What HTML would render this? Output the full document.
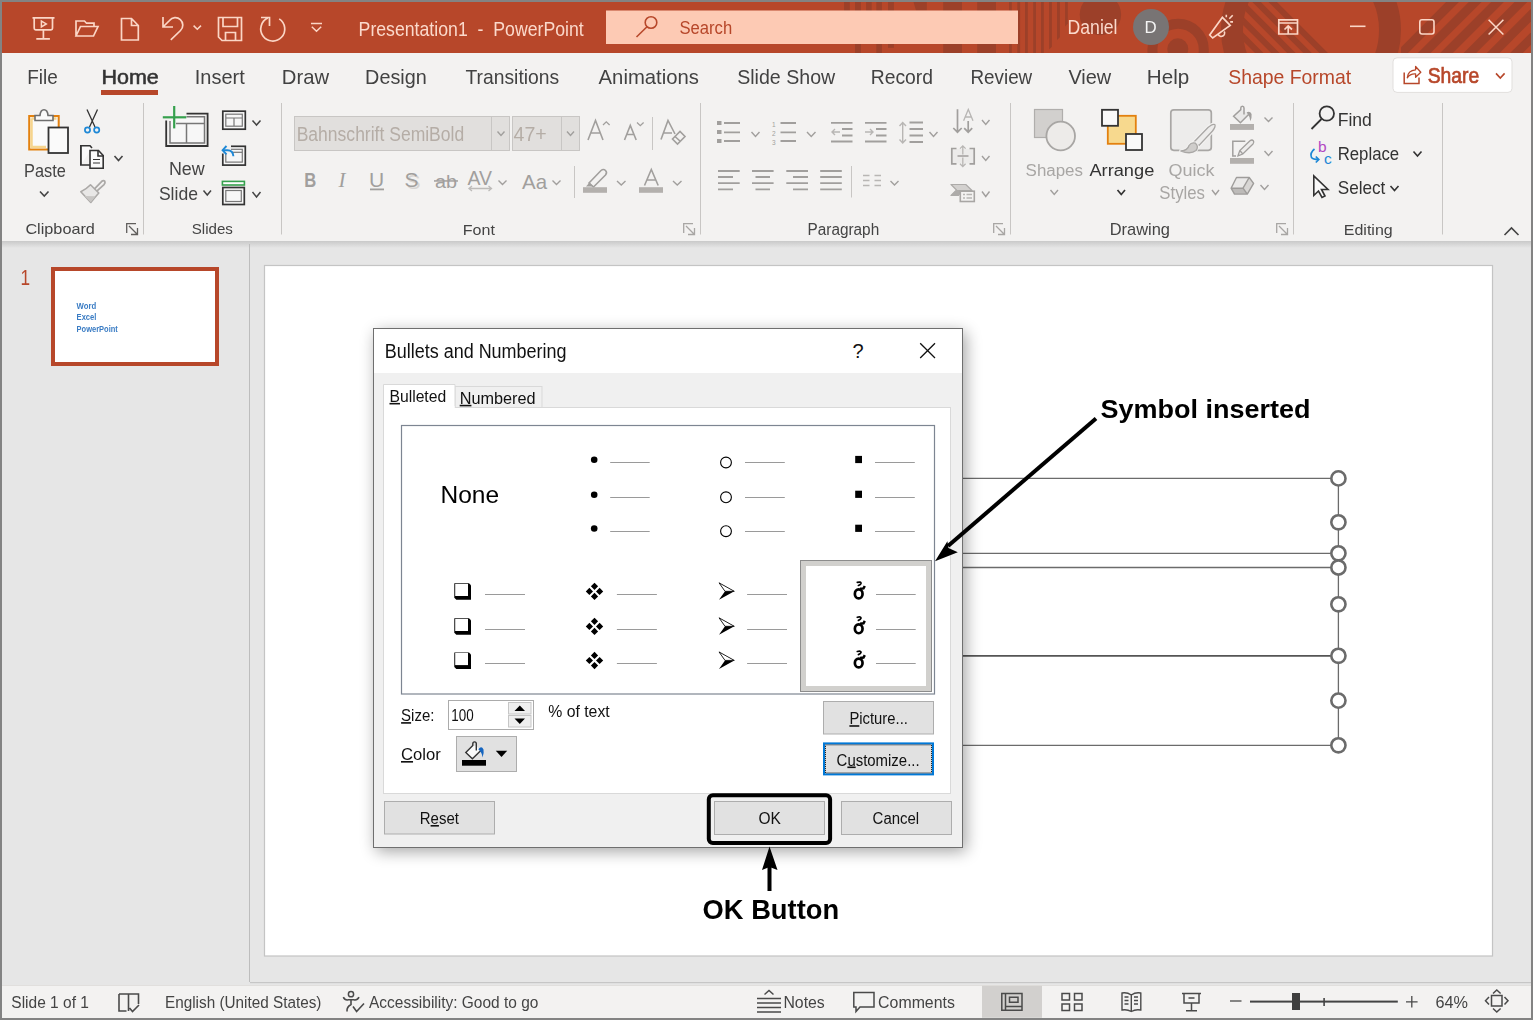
<!DOCTYPE html><html><head><meta charset="utf-8"><title>PowerPoint</title><style>html,body{margin:0;padding:0;width:1533px;height:1020px;overflow:hidden;background:#838383}svg{display:block;font-family:"Liberation Sans",sans-serif}text u{text-decoration:underline}</style></head><body>
<svg width="1533" height="1020" viewBox="0 0 1533 1020">
<defs>
<linearGradient id="ribshadow" x1="0" y1="0" x2="0" y2="1">
 <stop offset="0" stop-color="#C9C9C9"/><stop offset="1" stop-color="#E6E6E6"/></linearGradient>
<filter id="dlgshadow" x="-10%" y="-10%" width="125%" height="125%">
 <feGaussianBlur in="SourceAlpha" stdDeviation="8"/>
 <feOffset dx="3" dy="4" result="b"/>
 <feComponentTransfer><feFuncA type="linear" slope="0.36"/></feComponentTransfer>
 <feMerge><feMergeNode/><feMergeNode in="SourceGraphic"/></feMerge>
</filter>
<clipPath id="titleclip"><rect x="2" y="2" width="1529" height="51"/></clipPath>
</defs>
<rect x="0" y="0" width="1533" height="1020" fill="#838383"/>
<rect x="2" y="2" width="1529" height="51" fill="#B7472A"/>
<rect x="2" y="53" width="1529" height="188" fill="#F3F2F1"/>
<rect x="2" y="241" width="1529" height="744" fill="#E6E6E6"/>
<rect x="2" y="241" width="1529" height="7" fill="url(#ribshadow)"/>
<rect x="2" y="985" width="1529" height="33" fill="#F3F2F1"/>
<g clip-path="url(#titleclip)" fill="#9C4029">
<rect x="844.1" y="2" width="5.7" height="9"/>
<rect x="855" y="2" width="5.9" height="9"/>
<rect x="866.1" y="2" width="5.6" height="9"/>
<rect x="876.3" y="2" width="5.6" height="9"/>
<rect x="888" y="2" width="5.9" height="9"/>
<rect x="943.2" y="2" width="18.8" height="9"/>
<rect x="977.2" y="2" width="18.8" height="9"/>
<path d="M913.5 2 H926.8 V10.5 H916 Z"/>
<rect x="855" y="44" width="5.9" height="9"/>
<rect x="876.3" y="44" width="5.6" height="9"/>
<rect x="943.2" y="44" width="18.8" height="9"/>
<rect x="977.2" y="44" width="18.8" height="9"/>
<rect x="888" y="44" width="5.9" height="3.8"/>
<rect x="1009" y="2" width="2.8" height="51"/>
<rect x="1017.3" y="2" width="2.8" height="51"/>
<rect x="1025" y="2" width="2.8" height="51"/>
<rect x="1033.2" y="2" width="2.8" height="51"/>
<rect x="1041" y="2" width="2.8" height="51"/>
<path d="M1049.1 2 H1051.9 V46.8 L1049.1 49.6 Z"/>
<path d="M1057 2 H1059.9 V37.2 L1057 40 Z"/>
<path d="M1065.1 2 H1067.8 V23.6 L1065.1 26.4 Z"/>
<circle cx="1100.4" cy="14.5" r="20.7"/>
<circle cx="1178.1" cy="49.5" r="25.7" fill="none" stroke="#9C4029" stroke-width="10"/>
<circle cx="1177.8" cy="48.8" r="10.5"/>
<circle cx="1311" cy="30" r="79" fill="none" stroke="#9C4029" stroke-width="22"/>
<clipPath id="ringin"><circle cx="1311" cy="30" r="68.5"/></clipPath>
<g clip-path="url(#ringin)" stroke="#9C4029" stroke-width="6" fill="none">
<line x1="1203.25" y1="-3" x2="1266.25" y2="60"/>
<line x1="1219.35" y1="-3" x2="1282.35" y2="60"/>
<line x1="1235.45" y1="-3" x2="1298.45" y2="60"/>
<line x1="1251.55" y1="-3" x2="1314.55" y2="60"/>
<line x1="1267.65" y1="-3" x2="1330.65" y2="60"/>
</g>
<clipPath id="ringout"><rect x="1401" y="2" width="130" height="51"/></clipPath>
<g clip-path="url(#ringout)" stroke="#9C4029" stroke-width="9" fill="none">
<line x1="1457" y1="-2.5" x2="1397" y2="57.5"/>
<line x1="1479.7" y1="-2.5" x2="1419.7" y2="57.5"/>
<line x1="1502" y1="-2.5" x2="1442" y2="57.5"/>
<line x1="1525.4" y1="-2.5" x2="1465.4" y2="57.5"/>
<line x1="1548.7" y1="-2.5" x2="1488.7" y2="57.5"/>
<line x1="1572" y1="-2.5" x2="1512" y2="57.5"/>
</g></g>
<rect x="606" y="10.5" width="412" height="33.5" fill="#FDCAB4"/>
<g fill="none" stroke="#B7472A" stroke-width="1.6">
<circle cx="651" cy="22.5" r="5.8"/><line x1="647" y1="26.8" x2="636.5" y2="37"/></g>
<circle cx="1151" cy="27" r="18" fill="#787474"/>
<g fill="none" stroke="#FBD6C6" stroke-width="1.7" stroke-linejoin="miter">
<path d="M32.5 17.8 H54.5 M34.2 17.8 V28.3 Q34.2 29.8 35.7 29.8 H51 Q52.5 29.8 52.5 28.3 V17.8 M43.4 29.8 V38.8 M36.3 38.8 H49.9"/>
<path d="M41.4 21 V26.9 L46.3 23.9 Z" stroke-width="1.5"/>
<path d="M76 36 V21 H84.5 L86.5 23.2 H94 V26.5 M76 36 L80.5 26.5 H98 L93.5 36 Z"/>
<path d="M121.5 18.5 H131.5 L138.3 25.5 V40 H121.5 Z M131.5 18.5 V25.5 H138.3"/>
<path d="M163 17 V27 H173 M163.5 26.5 L169.5 20.5 A 7.45 7.45 0 1 1 180.5 30.5 L170.8 39.8"/>
<path d="M193.6 25.6 L197.3 29.3 L201 25.6" stroke-width="1.5"/>
<path d="M218.5 17.5 H241.5 V40.5 H222 L218.5 37 Z M223 17.5 V26.5 H237.5 V17.5 M225.5 40.5 V32.5 H235.5 V40.5"/>
<path d="M279.2 18.9 A12 12 0 1 1 267.8 18.1 M261 17.5 H269.5 V26"/>
<path d="M311 23.5 H322 M311.8 26.8 L316.5 31.2 L321.2 26.8" stroke-width="1.5"/>
<path d="M1222.4 17.3 L1230.2 25.5 L1212.7 38 L1209.7 35 Z M1218.3 34.6 A3.3 3.3 0 0 0 1224.2 31.5"/>
<path d="M1226.3 14.8 V17.3 M1229.3 18.8 L1232.7 15.3 M1230.2 21.9 H1233" stroke-width="1.6"/>
<path d="M1278.8 19.8 H1297.5 V34 H1278.8 Z M1278.8 23 H1297.5 M1288.2 33.5 V26.5 M1284.5 29.5 L1288.2 26 L1292 29.5"/>
<path d="M1350 26.3 H1365.5" stroke-width="1.6"/>
<rect x="1419.8" y="19.8" width="14.2" height="14.2" rx="2.2" stroke-width="1.6"/>
<path d="M1488.6 19.8 L1503.4 34.5 M1503.4 19.8 L1488.6 34.5" stroke-width="1.6"/>
</g>
<rect x="101" y="90" width="57" height="5" fill="#B7472A"/>
<rect x="1393" y="57.8" width="119" height="34.6" rx="4" fill="#FFFFFF" stroke="#E1DFDD" stroke-width="1"/>
<g fill="none" stroke="#B7472A" stroke-width="1.5"><path d="M1404.2 72.5 V83.5 H1419 V77.5"/><path d="M1407.3 77.8 Q1407.8 70.3 1415.6 69.8 V66.5 L1420.8 72.2 L1415.6 77.2 V74 Q1410.2 73.6 1407.3 77.8 Z" stroke-width="1.3" stroke-linejoin="round"/></g>
<path d="M1496 73.4 L1500.3 78 L1504.6 73.4" fill="none" stroke="#B7472A" stroke-width="1.6"/>
<line x1="143.5" y1="103" x2="143.5" y2="234.5" stroke="#C8C6C4" stroke-width="1"/>
<line x1="281.5" y1="103" x2="281.5" y2="234.5" stroke="#C8C6C4" stroke-width="1"/>
<line x1="700.5" y1="103" x2="700.5" y2="234.5" stroke="#C8C6C4" stroke-width="1"/>
<line x1="1010.5" y1="103" x2="1010.5" y2="234.5" stroke="#C8C6C4" stroke-width="1"/>
<line x1="1293.5" y1="103" x2="1293.5" y2="234.5" stroke="#C8C6C4" stroke-width="1"/>
<line x1="1442.5" y1="103" x2="1442.5" y2="234.5" stroke="#C8C6C4" stroke-width="1"/>
<rect x="29.2" y="116" width="29.5" height="33.5" fill="#FAFAFA" stroke="#E3810F" stroke-width="2"/>
<path d="M31.5 118.5 V147 H46 M31.5 118.5 H56.5" fill="none" stroke="#F6D58E" stroke-width="2.5"/>
<path d="M35 120.5 V115.5 H40 Q40.5 109.8 44 109.8 Q47.5 109.8 48 115.5 H53 V120.5 Z" fill="#FAFAFA" stroke="#6E6E6E" stroke-width="1.6"/>
<rect x="48.5" y="127.5" width="19.5" height="25.5" fill="#FAFAFA" stroke="#333333" stroke-width="1.8"/>
<path d="M40 191.5 L44.25 196 L48.5 191.5" fill="none" stroke="#444" stroke-width="1.6"/>
<g fill="none" stroke="#333" stroke-width="1.3"><path d="M87 109.5 L95 127 M97.5 109.5 L89.5 127"/></g>
<g fill="none" stroke="#1E88D6" stroke-width="1.7"><circle cx="87.5" cy="130" r="2.6"/><circle cx="96.7" cy="130" r="2.6"/></g>
<g fill="#FAFAFA" stroke="#333" stroke-width="1.6"><path d="M80.8 165 V145.8 H90 L92 148"/><path d="M90 150.5 H98.5 L103.2 155.5 V168.3 H90 Z"/><path d="M98 150.5 V156 H103.2" fill="none"/><path d="M93 159.5 H100 M93 163 H100" stroke-width="1.2"/></g>
<path d="M80.8 145.8 V165 H90" fill="none" stroke="#333" stroke-width="1.6"/>
<path d="M114.5 156 L118.5 160.5 L122.5 156" fill="none" stroke="#444" stroke-width="1.6"/>
<path d="M80.8 191.8 Q86 189.5 90.5 184.8 L98.8 193 Q94.8 197.5 90.8 202.5 Z" fill="#E8E7E6" stroke="#ABA9A7" stroke-width="1.6" stroke-linejoin="round"/>
<path d="M84.5 196 L90.8 202.3 Q93.5 198.8 95.6 196.3 Z" fill="#C8C6C4"/>
<path d="M94.5 188.8 L101.8 181.3 Q103.6 179.8 104.8 181.4 Q105.6 183 104 184.6 L96.8 191.2" fill="none" stroke="#ABA9A7" stroke-width="1.8"/>
<g fill="none" stroke="#605E5C" stroke-width="1.3"><path d="M126.7 233 V223.7 H136"/><path d="M129 226 L137.5 234.5 M131 234.5 H137.5 V228"/></g>
<g fill="none" stroke="#333" stroke-width="1.8"><path d="M166.2 120.5 V146 H207.6 V113.6 H186.5"/></g>
<g fill="#F7F7F7" stroke="#777" stroke-width="1.5"><path d="M170 121 V143 H204.5 V116.8 H186.5"/></g>
<g fill="none" stroke="#777" stroke-width="1.5"><path d="M176 123.5 H204 M186.5 123.5 V143"/></g>
<g stroke="#35A04D" stroke-width="2.2"><line x1="162.8" y1="117.3" x2="186.3" y2="117.3"/><line x1="174.2" y1="106" x2="174.2" y2="128.4"/></g>
<path d="M203.5 190.5 L207.25 195 L211 190.5" fill="none" stroke="#444" stroke-width="1.5"/>
<rect x="222.8" y="111.2" width="22.5" height="18" fill="#F7F7F7" stroke="#333" stroke-width="1.7"/>
<rect x="225.8" y="114.2" width="16.5" height="12" fill="none" stroke="#777" stroke-width="1.2"/>
<path d="M226 118 H242 M234 118 V126" fill="none" stroke="#777" stroke-width="1.2"/>
<path d="M252.5 120.5 L256.5 125 L260.5 120.5" fill="none" stroke="#444" stroke-width="1.5"/>
<rect x="222.8" y="146.3" width="22.5" height="18.8" fill="#F7F7F7" stroke="#333" stroke-width="1.7"/>
<rect x="225.8" y="149.3" width="16.5" height="12.8" fill="none" stroke="#777" stroke-width="1.2"/>
<path d="M232 152.3 H242" stroke="#777" stroke-width="1.2"/>
<rect x="221" y="144" width="10" height="9.5" fill="#F3F2F1"/>
<path d="M223.5 150.2 H227.5 Q233 150.2 233.4 156.2" fill="none" stroke="#1E88D6" stroke-width="1.9"/>
<path d="M226.5 146 L222.6 150.2 L226.5 154.4" fill="none" stroke="#1E88D6" stroke-width="1.9"/>
<rect x="222.4" y="181.4" width="22" height="3.6" fill="#FFFFFF" stroke="#35A04D" stroke-width="1.6"/>
<rect x="222.8" y="187.5" width="21.5" height="17" fill="#F7F7F7" stroke="#333" stroke-width="1.7"/>
<rect x="225.8" y="190.5" width="15.5" height="11" fill="none" stroke="#777" stroke-width="1.2"/>
<path d="M252.5 192 L256.5 197 L260.5 192" fill="none" stroke="#444" stroke-width="1.5"/>
<rect x="294.5" y="116.5" width="215" height="34" fill="#E1DFDD" stroke="#C8C6C4"/>
<line x1="491.5" y1="117" x2="491.5" y2="150" stroke="#C8C6C4"/>
<path d="M497.5 131.5 L501.0 135.5 L504.5 131.5" fill="none" stroke="#A19F9D" stroke-width="1.4"/>
<rect x="512.5" y="116.5" width="67" height="34" fill="#E1DFDD" stroke="#C8C6C4"/>
<line x1="561.5" y1="117" x2="561.5" y2="150" stroke="#C8C6C4"/>
<path d="M567 131.5 L570.5 135.5 L574 131.5" fill="none" stroke="#A19F9D" stroke-width="1.4"/>
<g fill="none" stroke="#A19F9D" stroke-width="1.6"><path d="M588 140 L595.5 120.5 L603 140 M590.8 133 H600.2"/><path d="M603 125 L606.3 121.8 L609.6 125" stroke-width="1.3"/></g>
<g fill="none" stroke="#A19F9D" stroke-width="1.6"><path d="M624.5 140 L630.3 125.5 L636.2 140 M626.8 134.5 H633.8"/><path d="M637 122.5 L640.3 125.7 L643.6 122.5" stroke-width="1.3"/></g>
<line x1="652.5" y1="117" x2="652.5" y2="150" stroke="#C8C6C4"/>
<g fill="none" stroke="#A19F9D" stroke-width="1.6"><path d="M661 139.5 L668 120.5 L675 134 M663.5 133 H672"/><path d="M672.5 139 L680 131.5 L685 136.5 L677.5 144 Z M675 136.5 L680.5 141.5"/></g>
<text x="304.3" y="187" font-size="20.5" font-weight="700" fill="#A19F9D" textLength="12" lengthAdjust="spacingAndGlyphs">B</text>
<text x="338.5" y="187" font-size="21" font-style="italic" font-family="Liberation Serif, serif" fill="#A19F9D">I</text>
<text x="369" y="187" font-size="21" fill="#A19F9D">U</text><rect x="370" y="188.5" width="14" height="1.8" fill="#A19F9D"/>
<text x="406.5" y="188.5" font-size="21" fill="#D7D5D3">S</text><text x="404.5" y="187" font-size="21" fill="#A19F9D">S</text>
<text x="435" y="187.5" font-size="18" fill="#A19F9D" textLength="22" lengthAdjust="spacingAndGlyphs">ab</text><rect x="434" y="180.2" width="24" height="1.5" fill="#A19F9D"/>
<text x="467.5" y="184.5" font-size="20" fill="#A19F9D" textLength="24.5" lengthAdjust="spacingAndGlyphs">AV</text>
<g fill="none" stroke="#BDBBB9" stroke-width="1.3"><path d="M469 188.5 H491.5 M472 186 L469 188.5 L472 191 M488.5 186 L491.5 188.5 L488.5 191"/></g>
<path d="M498.5 180.5 L502.5 184.5 L506.5 180.5" fill="none" stroke="#A19F9D" stroke-width="1.4"/>
<text x="522" y="188.5" font-size="21" fill="#A19F9D" textLength="25" lengthAdjust="spacingAndGlyphs">Aa</text>
<path d="M552.5 180.5 L556.5 184.5 L560.5 180.5" fill="none" stroke="#A19F9D" stroke-width="1.4"/>
<line x1="574.5" y1="166" x2="574.5" y2="198" stroke="#C8C6C4"/>
<g fill="none" stroke="#A19F9D" stroke-width="1.6"><path d="M589 183 L601 170.5 Q603.5 168.5 605.5 170.5 Q607.5 172.5 605.5 175 L593.5 187 Z"/></g>
<path d="M586 186.5 L589.5 182.5 L593.5 186.5 Z" fill="#A19F9D"/>
<rect x="583" y="187.2" width="24" height="5.6" fill="#B3B0AD"/>
<path d="M617 181 L621.25 185 L625.5 181" fill="none" stroke="#A19F9D" stroke-width="1.4"/>
<g fill="none" stroke="#A19F9D" stroke-width="1.6"><path d="M644.5 185.5 L651.3 169.5 L658.2 185.5 M647 180 H655.8"/></g>
<rect x="639" y="187.2" width="24" height="5.6" fill="#B3B0AD"/>
<path d="M673 181 L677.25 185 L681.5 181" fill="none" stroke="#A19F9D" stroke-width="1.4"/>
<g fill="none" stroke="#A8A6A4" stroke-width="1.3"><path d="M683.7 233 V223.7 H693"/><path d="M686 226 L694.5 234.5 M688 234.5 H694.5 V228"/></g>
<g fill="#A19F9D"><rect x="717" y="121" width="4.5" height="4"/><rect x="717" y="130" width="4.5" height="4"/><rect x="717" y="139" width="4.5" height="4"/></g>
<g fill="none" stroke="#A19F9D" stroke-width="1.8"><path d="M724 123 H740 M724 132.3 H740 M724 141 H740"/></g>
<path d="M751.5 132 L755.5 136.5 L759.5 132" fill="none" stroke="#A19F9D" stroke-width="1.4"/>
<text x="772" y="127" font-size="6.5" fill="#A19F9D">1</text><text x="772" y="136" font-size="6.5" fill="#A19F9D">2</text><text x="772" y="145" font-size="6.5" fill="#A19F9D">3</text>
<g fill="none" stroke="#A19F9D" stroke-width="1.8"><path d="M780.5 123 H796 M780.5 132.3 H796 M780.5 141 H796"/></g>
<path d="M807 132 L811.25 136.5 L815.5 132" fill="none" stroke="#A19F9D" stroke-width="1.4"/>
<g fill="none" stroke="#A19F9D" stroke-width="1.8"><path d="M831 122.8 H852.5 M842 129 H852.5 M842 135.5 H852.5 M831 141.5 H852.5"/></g>
<path d="M840 132 H832 M835 129 L832 132 L835 135" fill="none" stroke="#B8B6B4" stroke-width="1.4"/>
<g fill="none" stroke="#A19F9D" stroke-width="1.8"><path d="M865 122.8 H886.5 M876 129 H886.5 M876 135.5 H886.5 M865 141.5 H886.5"/></g>
<path d="M865 132 H873 M870 129 L873 132 L870 135" fill="none" stroke="#B8B6B4" stroke-width="1.4"/>
<g fill="none" stroke="#A19F9D" stroke-width="1.8"><path d="M909.5 122.5 H923 M909.5 129 H923 M909.5 135.5 H923 M909.5 142 H923"/></g>
<path d="M902.7 123 V142.5 M899.5 126 L902.7 122.5 L906 126 M899.5 139.5 L902.7 143 L906 139.5" fill="none" stroke="#B8B6B4" stroke-width="1.4"/>
<path d="M929.5 132 L933.5 136.5 L937.5 132" fill="none" stroke="#A19F9D" stroke-width="1.4"/>
<g fill="none" stroke="#A19F9D" stroke-width="1.8"><path d="M718 171 H739.7 M718 177 H733 M718 183.2 H739.7 M718 189.4 H733"/></g>
<g fill="none" stroke="#A19F9D" stroke-width="1.8"><path d="M752 171 H773.6 M755.5 177 H770 M752 183.2 H773.6 M755.5 189.4 H770"/></g>
<g fill="none" stroke="#A19F9D" stroke-width="1.8"><path d="M786.3 171 H808 M793 177 H808 M786.3 183.2 H808 M793 189.4 H808"/></g>
<g fill="none" stroke="#A19F9D" stroke-width="1.8"><path d="M820.2 171 H841.8 M820.2 177 H841.8 M820.2 183.2 H841.8 M820.2 189.4 H841.8"/></g>
<line x1="851.5" y1="166" x2="851.5" y2="197.5" stroke="#C8C6C4"/>
<g fill="none" stroke="#B8B6B4" stroke-width="1.5"><path d="M863 175.5 H869.5 M863 180.5 H869.5 M863 185.5 H869.5 M874.5 175.5 H881 M874.5 180.5 H881 M874.5 185.5 H881"/></g>
<path d="M890.5 181 L894.5 185 L898.5 181" fill="none" stroke="#A19F9D" stroke-width="1.4"/>
<g fill="none" stroke="#A19F9D" stroke-width="1.8"><path d="M957.5 109.2 V132 M953.3 128 L957.5 132.2 L961.7 128 M968.2 121 V132 M964.2 128.2 L968.2 132.2 L972.2 128.2" stroke-width="1.7"/></g>
<path d="M963.6 120.8 L968.3 109.5 L973 120.8 M965.2 117 H971.4" fill="none" stroke="#B8B6B4" stroke-width="1.3"/>
<path d="M982 120 L985.75 124.5 L989.5 120" fill="none" stroke="#A19F9D" stroke-width="1.4"/>
<rect x="952" y="149" width="22" height="14.5" fill="#ECEBEA"/>
<g fill="none" stroke="#A19F9D" stroke-width="1.8"><path d="M956.5 148.5 H951.8 V163.8 H956.5 M969.5 148.5 H974.2 V163.8 H969.5 M957.5 156 H968.5" stroke-width="1.7"/></g>
<path d="M962.8 146 V154.5 M960 148.6 L962.8 145.8 L965.6 148.6 M962.8 157.5 V166.5 M960 163.8 L962.8 166.6 L965.6 163.8" fill="none" stroke="#B8B6B4" stroke-width="1.3"/>
<path d="M982 156 L985.75 160.5 L989.5 156" fill="none" stroke="#A19F9D" stroke-width="1.4"/>
<path d="M951 184.5 H965.8 L972 190.5 H962 L958.5 195.5 H951 L956.5 190 Z" fill="#D3D1CF" stroke="#ADABA9" stroke-width="1.2" stroke-linejoin="round"/>
<path d="M951.5 195 L956.5 190 H962 L958.5 195.5 Z" fill="#ADABA9"/>
<rect x="960.3" y="191.2" width="14" height="10.3" fill="#F3F2F1" stroke="#A8A6A4" stroke-width="1.6"/>
<path d="M963 194.5 H965 M966.5 194.5 H972 M963 198 H965 M966.5 198 H972" stroke="#B8B6B4" stroke-width="1.3"/>
<path d="M982 191.5 L985.75 196.5 L989.5 191.5" fill="none" stroke="#A19F9D" stroke-width="1.4"/>
<g fill="none" stroke="#A8A6A4" stroke-width="1.3"><path d="M993.7 233 V223.7 H1003"/><path d="M996 226 L1004.5 234.5 M998 234.5 H1004.5 V228"/></g>
<rect x="1034.5" y="109.5" width="28" height="28" fill="#D2D0CE" stroke="#B0AEAC" stroke-width="1.2"/>
<circle cx="1060.7" cy="136" r="14.3" fill="#EDEBE9" stroke="#A8A6A4" stroke-width="1.8"/>
<path d="M1050.5 190 L1054.25 194.5 L1058 190" fill="none" stroke="#A19F9D" stroke-width="1.4"/>
<rect x="1107.8" y="115.8" width="28" height="28" fill="#F7D98E" stroke="#E3810F" stroke-width="1.8"/>
<rect x="1102" y="109.8" width="16" height="16" fill="#F9F9F9" stroke="#333" stroke-width="1.8"/>
<rect x="1126" y="134" width="16" height="16" fill="#F9F9F9" stroke="#333" stroke-width="1.8"/>
<path d="M1117.5 190 L1121.25 194.5 L1125 190" fill="none" stroke="#333" stroke-width="1.7"/>
<rect x="1170.8" y="109.8" width="40.5" height="40.5" rx="3" fill="#EDECEB" stroke="#A9A7A5" stroke-width="1.7"/>
<path d="M1214.8 124.5 Q1216 126.5 1212.5 131 L1199 145.5 L1194 142 L1208 127.5 Q1212.5 123.5 1214.8 124.5 Z" fill="#EDECEB" stroke="#F3F2F1" stroke-width="3.5"/>
<path d="M1214.8 124.5 Q1216 126.5 1212.5 131 L1199 145.5 L1194 142 L1208 127.5 Q1212.5 123.5 1214.8 124.5 Z" fill="#EDECEB" stroke="#A9A7A5" stroke-width="1.3"/>
<path d="M1179.5 150.8 Q1187.5 151 1189 145.5 Q1191.5 141.8 1195.5 143.2 Q1199 146.5 1196 150.5 Q1190.5 154.8 1179.5 150.8 Z" fill="#CFCDCB" stroke="#F3F2F1" stroke-width="3"/>
<path d="M1180.5 150.8 Q1187.5 151 1189 145.5 Q1191.5 141.8 1195.5 143.2 Q1199 146.5 1196 150.5 Q1190.5 154.8 1180.5 150.8 Z" fill="#CFCDCB" stroke="#A9A7A5" stroke-width="1.3"/>
<path d="M1212 190 L1215.5 194.5 L1219 190" fill="none" stroke="#A19F9D" stroke-width="1.4"/>
<path d="M1233.6 116.2 L1240.6 109.4 L1248.6 114 L1240.4 122.8 Z" fill="#E9E8E7"/>
<g fill="none" stroke="#A19F9D" stroke-width="1.8"><path d="M1244 114.5 V108 Q1244 106.2 1242.4 106.2 Q1240.8 106.2 1240.8 108 V109.6 L1233.6 116.2 L1240.4 122.8 L1248.6 114.4" stroke-width="1.5"/></g>
<path d="M1246.6 112.3 Q1250 110.5 1251.6 114 Q1252 117.5 1250.3 121.3 Q1250 116.5 1246.6 112.3 Z" fill="#A19F9D"/>
<rect x="1230" y="124" width="24" height="5.9" fill="#B3B0AD"/>
<path d="M1264.5 117.5 L1268.5 121.5 L1272.5 117.5" fill="none" stroke="#A19F9D" stroke-width="1.4"/>
<g fill="none" stroke="#A19F9D" stroke-width="1.8"><path d="M1245.3 141.2 H1232.8 V156 H1236" stroke-width="1.5"/><path d="M1238 155.8 L1239.8 150.5 L1250 140.8 Q1252 139.2 1253.3 140.7 Q1254.6 142.3 1253 144 L1242.8 154 Z M1239.8 150.5 L1242.8 154" stroke-width="1.3" fill="#EDECEB"/></g>
<rect x="1230" y="158" width="24" height="5.8" fill="#B3B0AD"/>
<path d="M1264.5 151 L1268.5 155.5 L1272.5 151" fill="none" stroke="#A19F9D" stroke-width="1.4"/>
<path d="M1236.5 177.5 H1249.2 L1243 188.2 H1231.1 Z" fill="#EAE9E8"/>
<path d="M1249.2 177.5 L1253.6 183.3 L1247.3 194.1 L1243 188.2 Z" fill="#D8D6D4"/>
<path d="M1231.1 188.2 H1243 L1247.3 194.1 H1234.5 Z" fill="#BDBBB9"/>
<path d="M1236.5 177.5 H1249.2 L1253.6 183.3 L1247.3 194.1 H1234.5 L1231.1 188.2 Z M1231.1 188.2 H1243 L1249.2 177.5 M1243 188.2 L1247.3 194.1" fill="none" stroke="#9E9C9A" stroke-width="1.4" stroke-linejoin="round"/>
<path d="M1260.5 185 L1264.5 189.5 L1268.5 185" fill="none" stroke="#A19F9D" stroke-width="1.4"/>
<g fill="none" stroke="#A8A6A4" stroke-width="1.3"><path d="M1276.7 233 V223.7 H1286"/><path d="M1279 226 L1287.5 234.5 M1281 234.5 H1287.5 V228"/></g>
<g fill="none" stroke="#333" stroke-width="1.8"><circle cx="1326.8" cy="113.5" r="7.2"/><path d="M1321.5 119 L1311.5 129"/></g>
<text x="1318" y="151.8" font-size="15.5" fill="#B146C2">b</text>
<text x="1324" y="164.2" font-size="15.5" fill="#1E88D6">c</text>
<path d="M1314.5 149 Q1309.5 153 1311.5 157.5 Q1313 159.5 1318.5 159.5 M1315.8 156.5 L1318.8 159.5 L1315.8 162.5" fill="none" stroke="#1E88D6" stroke-width="1.7"/>
<path d="M1413.5 151.5 L1417.5 156 L1421.5 151.5" fill="none" stroke="#333" stroke-width="1.6"/>
<path d="M1313.8 175.8 V195.5 L1318.5 191 L1322 197.5 L1325 196 L1321.5 189.5 H1328 Z" fill="#FAFAFA" stroke="#333" stroke-width="1.6" stroke-linejoin="miter"/>
<path d="M1390.5 186 L1394.5 190.5 L1398.5 186" fill="none" stroke="#333" stroke-width="1.6"/>
<path d="M1504.5 235 L1511.5 228 L1518.5 235" fill="none" stroke="#444" stroke-width="1.6"/>
<line x1="249.5" y1="244" x2="249.5" y2="982" stroke="#BDBDBD" stroke-width="1"/>
<rect x="53" y="269" width="164" height="95" fill="#FFFFFF" stroke="#B7472A" stroke-width="4"/>
<rect x="264.5" y="265.5" width="1228" height="690.5" fill="#FFFFFF" stroke="#C4C4C4" stroke-width="1.2"/>
<rect x="250" y="982" width="1281" height="1.2" fill="#C6C6C6"/>
<g fill="none" stroke="#6B6B6B" stroke-width="1.3"><line x1="900" y1="478.4" x2="1338.4" y2="478.4"/><line x1="900" y1="553.3" x2="1338.4" y2="553.3"/><line x1="900" y1="567.5" x2="1338.4" y2="567.5"/><line x1="900" y1="745.3" x2="1338.4" y2="745.3"/></g>
<line x1="900" y1="655.8" x2="1338.4" y2="655.8" stroke="#555" stroke-width="1.8"/>
<line x1="1338.4" y1="478.4" x2="1338.4" y2="745.3" stroke="#6B6B6B" stroke-width="1.3"/>
<g fill="#FFFFFF" stroke="#6B6B6B" stroke-width="2.6"><circle cx="1338.4" cy="478.4" r="7.1"/><circle cx="1338.4" cy="522.3" r="7.1"/><circle cx="1338.4" cy="553.3" r="7.1"/><circle cx="1338.4" cy="567.5" r="7.1"/><circle cx="1338.4" cy="604.3" r="7.1"/><circle cx="1338.4" cy="655.8" r="7.1"/><circle cx="1338.4" cy="700.6" r="7.1"/><circle cx="1338.4" cy="745.3" r="7.1"/></g>
<rect x="2" y="985" width="1529" height="1" fill="#E1DFDD"/>
<g fill="none" stroke="#4A4A4A" stroke-width="1.6"><path d="M119 994 H128.5 L128.5 1011 M128.5 994 H138.5 V1004 M119 994 V1011 H126.5 M129.5 1008 L132.5 1011.5 L139 1005"/></g>
<g fill="none" stroke="#4A4A4A" stroke-width="1.6"><circle cx="351" cy="994.2" r="2.6" stroke-width="1.5"/><path d="M343.3 997.2 Q345 1000.6 348.3 999.8 H353.8 Q357.2 1000.6 359 997.2 M351 1000 V1004.5 Q346.5 1007 347 1011.5 M353 1006.5 L356.6 1011.5 L364 1003.5" stroke-width="1.6"/></g>
<g fill="none" stroke="#4A4A4A" stroke-width="1.6"><path d="M757 998.5 H781 M757 1003 H781 M757 1007.5 H781 M757 1012 H781 M764.5 994.5 L769 990.5 L773.5 994.5" stroke-width="1.5"/></g>
<g fill="none" stroke="#4A4A4A" stroke-width="1.6"><path d="M853.8 992.5 H874 V1007 H860 L856 1011.5 V1007 H853.8 Z" stroke-width="1.5"/></g>
<rect x="982" y="985.8" width="60" height="32" fill="#D2D0CE"/>
<g fill="none" stroke="#4A4A4A" stroke-width="1.6"><path d="M1001.8 993.5 H1022 V1010.3 H1001.8 Z M1005.5 993.5 V1010.3 M1005.5 1006.5 H1022 M1009.5 997.3 H1018 V1002.3 H1009.5 Z" stroke-width="1.5"/></g>
<g fill="none" stroke="#4A4A4A" stroke-width="1.6"><path d="M1062 993.5 H1069.5 V1000 H1062 Z M1074.5 993.5 H1082 V1000 H1074.5 Z M1062 1004 H1069.5 V1010.5 H1062 Z M1074.5 1004 H1082 V1010.5 H1074.5 Z" stroke-width="1.5"/></g>
<g fill="none" stroke="#4A4A4A" stroke-width="1.6"><path d="M1122 993 Q1127 992 1131.3 995 Q1135.5 992 1140.8 993 V1010 Q1135.5 1009 1131.3 1011.5 Q1127 1009 1122 1010 Z M1131.3 995 V1011 M1124.5 997 H1128.5 M1124.5 1000.5 H1128.5 M1124.5 1004 H1128.5 M1134 997 H1138 M1134 1000.5 H1138 M1134 1004 H1138" stroke-width="1.4"/></g>
<g fill="none" stroke="#4A4A4A" stroke-width="1.6"><path d="M1182 993.5 H1201 M1184 993.5 V1003 H1199 V993.5 M1191.5 1003 V1010.5 M1186 1010.8 H1197 M1188.5 998 H1194.5" stroke-width="1.5"/></g>
<path d="M1230 1001 H1241.5" stroke="#4A4A4A" stroke-width="1.3"/>
<rect x="1250" y="1000.6" width="147.8" height="2" fill="#444"/>
<rect x="1292" y="993" width="8" height="17" fill="#3F3F3F"/>
<rect x="1323.3" y="998" width="1.6" height="8" fill="#444"/>
<path d="M1406 1001.8 H1417.6 M1411.8 996 V1007.6" stroke="#4A4A4A" stroke-width="1.3"/>
<g fill="none" stroke="#4A4A4A" stroke-width="1.6"><path d="M1491.5 995.5 H1502 V1006 H1491.5 Z M1493 993.5 L1496.8 990 L1500.6 993.5 M1493 1008.5 L1496.8 1012 L1500.6 1008.5 M1489 997 L1485.5 1000.8 L1489 1004.6 M1504.5 997 L1508 1000.8 L1504.5 1004.6" stroke-width="1.5"/></g>
<g filter="url(#dlgshadow)"><rect x="373" y="328" width="590" height="519.5" fill="#F0F0F0"/></g>
<rect x="373.5" y="328.5" width="589" height="519" fill="#F0F0F0" stroke="#6F6F6F" stroke-width="1"/>
<rect x="374" y="329" width="588" height="44" fill="#FFFFFF"/>
<path d="M920.2 343.2 L935 358 M935 343.2 L920.2 358" stroke="#111" stroke-width="1.3"/>
<text x="852.5" y="358" font-size="20" fill="#111">?</text>
<rect x="383.5" y="407.5" width="567" height="386" fill="#FFFFFF" stroke="#D9D9D9"/>
<rect x="455" y="386.5" width="87" height="21" fill="#F0F0F0" stroke="#D9D9D9"/>
<path d="M383.5 408 V384.5 H455 V408" fill="#FFFFFF" stroke="#D9D9D9"/>
<rect x="384" y="406" width="70.5" height="3" fill="#FFFFFF"/>
<rect x="401.5" y="425.5" width="533" height="268.5" fill="#FFFFFF" stroke="#7D8592" stroke-width="1.2"/>
<g stroke="#9A9A9A" stroke-width="1"><line x1="610.2" y1="462.5" x2="649.7" y2="462.5"/><line x1="610.2" y1="497.5" x2="649.7" y2="497.5"/><line x1="610.2" y1="531.5" x2="649.7" y2="531.5"/><line x1="745" y1="462.5" x2="784.8" y2="462.5"/><line x1="745" y1="497.5" x2="784.8" y2="497.5"/><line x1="745" y1="531.5" x2="784.8" y2="531.5"/><line x1="875" y1="462.5" x2="914.8" y2="462.5"/><line x1="875" y1="497.5" x2="914.8" y2="497.5"/><line x1="875" y1="531.5" x2="914.8" y2="531.5"/></g>
<g stroke="#9A9A9A" stroke-width="1"><line x1="485" y1="594.5" x2="525" y2="594.5"/><line x1="485" y1="629.5" x2="525" y2="629.5"/><line x1="485" y1="663.5" x2="525" y2="663.5"/><line x1="616.9" y1="594.5" x2="656.9" y2="594.5"/><line x1="616.9" y1="629.5" x2="656.9" y2="629.5"/><line x1="616.9" y1="663.5" x2="656.9" y2="663.5"/><line x1="747.1" y1="594.5" x2="787" y2="594.5"/><line x1="747.1" y1="629.5" x2="787" y2="629.5"/><line x1="747.1" y1="663.5" x2="787" y2="663.5"/><line x1="876" y1="594.5" x2="915.7" y2="594.5"/><line x1="876" y1="629.5" x2="915.7" y2="629.5"/><line x1="876" y1="663.5" x2="915.7" y2="663.5"/></g>
<g fill="#000"><circle cx="594.2" cy="459.8" r="3.3"/><circle cx="594.2" cy="494.8" r="3.3"/><circle cx="594.2" cy="528.5" r="3.3"/></g>
<g fill="none" stroke="#000" stroke-width="1.1"><circle cx="726" cy="462.5" r="5.4"/><circle cx="726" cy="497.3" r="5.4"/><circle cx="726" cy="531.2" r="5.4"/></g>
<g fill="#000"><rect x="855.2" y="455.9" width="6.8" height="7.2"/><rect x="855.2" y="490.7" width="6.8" height="7.2"/><rect x="855.2" y="524.6999999999999" width="6.8" height="7.2"/></g>
<path d="M454.3 583.3 H469 L471 585.3 V599.8 H456.3 L454.3 597.8 Z" fill="#000"/>
<rect x="455.2" y="583.9" width="12.8" height="12.1" fill="#FFF"/>
<path d="M594.50 582.75 L598.10 586.35 L594.50 589.95 L590.90 586.35 Z M599.60 587.80 L603.20 591.40 L599.60 595.00 L596.00 591.40 Z M594.50 592.85 L598.10 596.45 L594.50 600.05 L590.90 596.45 Z M589.40 587.80 L593.00 591.40 L589.40 595.00 L585.80 591.40 Z " fill="#000"/>
<path d="M719 582.8 L734.3 591.3 L719 599.8 L725 591.3 Z" fill="#000"/>
<path d="M719 582.8 L734.3 591.3 L725 591.3 Z" fill="#FFF" stroke="#000" stroke-width="0.8"/>
<path d="M454.3 618.3 H469 L471 620.3 V634.8 H456.3 L454.3 632.8 Z" fill="#000"/>
<rect x="455.2" y="618.9" width="12.8" height="12.1" fill="#FFF"/>
<path d="M594.50 617.75 L598.10 621.35 L594.50 624.95 L590.90 621.35 Z M599.60 622.80 L603.20 626.40 L599.60 630.00 L596.00 626.40 Z M594.50 627.85 L598.10 631.45 L594.50 635.05 L590.90 631.45 Z M589.40 622.80 L593.00 626.40 L589.40 630.00 L585.80 626.40 Z " fill="#000"/>
<path d="M719 617.8 L734.3 626.3 L719 634.8 L725 626.3 Z" fill="#000"/>
<path d="M719 617.8 L734.3 626.3 L725 626.3 Z" fill="#FFF" stroke="#000" stroke-width="0.8"/>
<path d="M454.3 652.4 H469 L471 654.4 V668.9 H456.3 L454.3 666.9 Z" fill="#000"/>
<rect x="455.2" y="653.0" width="12.8" height="12.1" fill="#FFF"/>
<path d="M594.50 651.85 L598.10 655.45 L594.50 659.05 L590.90 655.45 Z M599.60 656.90 L603.20 660.50 L599.60 664.10 L596.00 660.50 Z M594.50 661.95 L598.10 665.55 L594.50 669.15 L590.90 665.55 Z M589.40 656.90 L593.00 660.50 L589.40 664.10 L585.80 660.50 Z " fill="#000"/>
<path d="M719 651.9 L734.3 660.4 L719 668.9 L725 660.4 Z" fill="#000"/>
<path d="M719 651.9 L734.3 660.4 L725 660.4 Z" fill="#FFF" stroke="#000" stroke-width="0.8"/>
<rect x="800.5" y="560.5" width="131" height="131" fill="#D1D0CD" stroke="#8C8C8C" stroke-width="1"/>
<rect x="806" y="566" width="120" height="120" fill="#FFFFFF"/>
<g stroke="#9A9A9A" stroke-width="1"><line x1="876" y1="594.5" x2="915.7" y2="594.5"/><line x1="876" y1="629.5" x2="915.7" y2="629.5"/><line x1="876" y1="663.5" x2="915.7" y2="663.5"/></g>
<g transform="translate(0 0)" fill="none" stroke="#000"><ellipse cx="858.7" cy="593.9" rx="3.85" ry="4.45" stroke-width="2.7"/><path d="M860 588.8 L863.5 588.4 L864.8 586" stroke-width="2.5"/><path d="M857.3 582.4 Q861.2 581.4 861 583.4 Q860.6 584.8 858.4 585.5" stroke-width="1.7" stroke-linecap="round"/></g>
<g transform="translate(0 34.9)" fill="none" stroke="#000"><ellipse cx="858.7" cy="593.9" rx="3.85" ry="4.45" stroke-width="2.7"/><path d="M860 588.8 L863.5 588.4 L864.8 586" stroke-width="2.5"/><path d="M857.3 582.4 Q861.2 581.4 861 583.4 Q860.6 584.8 858.4 585.5" stroke-width="1.7" stroke-linecap="round"/></g>
<g transform="translate(0 69.1)" fill="none" stroke="#000"><ellipse cx="858.7" cy="593.9" rx="3.85" ry="4.45" stroke-width="2.7"/><path d="M860 588.8 L863.5 588.4 L864.8 586" stroke-width="2.5"/><path d="M857.3 582.4 Q861.2 581.4 861 583.4 Q860.6 584.8 858.4 585.5" stroke-width="1.7" stroke-linecap="round"/></g>
<rect x="448.5" y="700.5" width="85" height="29" fill="#FFFFFF" stroke="#ABABAB"/>
<rect x="508.5" y="702.5" width="22.5" height="11.5" fill="#EFEFEF" stroke="#C6C6C6"/>
<rect x="508.5" y="715.5" width="22.5" height="11.5" fill="#EFEFEF" stroke="#C6C6C6"/>
<path d="M514.5 711 L519.8 705.5 L525 711 Z M514.5 718.5 L519.8 724 L525 718.5 Z" fill="#000"/>
<rect x="456.5" y="736.5" width="60" height="35" fill="#E1E1E1" stroke="#ADADAD"/>
<path d="M465.8 752.4 L472.8 745.5 L476.3 746 L480.6 750.8 L472.4 758.8 Z" fill="#FAFAFA"/>
<path d="M476.3 750.5 V743.8 Q476.3 741.9 474.55 741.9 Q472.8 741.9 472.8 743.8 V745.5 L465.8 752.4 L472.4 758.8 L480.6 750.8" fill="none" stroke="#333" stroke-width="1.4"/>
<path d="M478.3 749.2 Q481.5 745.2 483.5 749.5 Q484.3 753 482.5 757.5 Q482.2 752.5 478.3 749.2 Z" fill="#1565C0"/>
<rect x="462" y="760" width="24" height="5.7" fill="#000"/>
<path d="M495.8 750.8 H507.2 L501.5 757 Z" fill="#000"/>
<rect x="823.5" y="701.5" width="110" height="32.5" fill="#E1E1E1" stroke="#ADADAD"/>
<rect x="824" y="743.4" width="109" height="31" fill="#E1E1E1" stroke="#0078D7" stroke-width="2"/>
<rect x="825.5" y="744.9" width="106" height="28" fill="none" stroke="#111" stroke-width="1" stroke-dasharray="1 1"/>
<rect x="384.5" y="801.5" width="110" height="32.5" fill="#E1E1E1" stroke="#ADADAD"/>
<rect x="714.5" y="801.5" width="110" height="33" fill="#E1E1E1" stroke="#ADADAD"/>
<rect x="841.5" y="801.5" width="110" height="33" fill="#E1E1E1" stroke="#ADADAD"/>
<rect x="708.8" y="795.2" width="121.3" height="47.7" rx="4" fill="none" stroke="#000" stroke-width="4"/>
<path d="M769.5 846.5 L762 870 L769.5 867 L777.5 870 Z" fill="#000"/>
<rect x="767.5" y="866" width="4" height="25" fill="#000"/>
<line x1="1096" y1="418.5" x2="948" y2="546" stroke="#000" stroke-width="4"/>
<path d="M935 561.2 L947.4 541.3 L948.5 548 L957.8 552.2 Z" fill="#000"/>
<g style="will-change:transform">
<text x="358.6" y="36.0" font-size="20.64" font-weight="400" fill="#FBD9CB" textLength="225.1" lengthAdjust="spacingAndGlyphs" style="white-space:pre" >Presentation1  -  PowerPoint</text>
<text x="679.4" y="34.2" font-size="18.90" font-weight="400" fill="#B7472A" textLength="52.8" lengthAdjust="spacingAndGlyphs" style="white-space:pre" >Search</text>
<text x="1067.6" y="33.9" font-size="19.77" font-weight="400" fill="#FBD9CB" textLength="49.9" lengthAdjust="spacingAndGlyphs" style="white-space:pre" >Daniel</text>
<text x="1144.4" y="32.8" font-size="16.42" font-weight="400" fill="#F4F4F4" textLength="12.2" lengthAdjust="spacingAndGlyphs" style="white-space:pre" >D</text>
<text x="27.2" y="83.7" font-size="20.06" font-weight="400" fill="#424242" textLength="30.5" lengthAdjust="spacingAndGlyphs" style="white-space:pre" >File</text>
<text x="101.5" y="83.7" font-size="20.06" font-weight="400" fill="#333333" textLength="57.3" lengthAdjust="spacingAndGlyphs" style="white-space:pre" stroke="#333333" stroke-width="0.55">Home</text>
<text x="194.8" y="83.7" font-size="20.06" font-weight="400" fill="#424242" textLength="50.0" lengthAdjust="spacingAndGlyphs" style="white-space:pre" >Insert</text>
<text x="281.8" y="83.7" font-size="20.06" font-weight="400" fill="#424242" textLength="47.3" lengthAdjust="spacingAndGlyphs" style="white-space:pre" >Draw</text>
<text x="365.1" y="83.7" font-size="20.06" font-weight="400" fill="#424242" textLength="61.7" lengthAdjust="spacingAndGlyphs" style="white-space:pre" >Design</text>
<text x="465.5" y="83.7" font-size="20.06" font-weight="400" fill="#424242" textLength="93.7" lengthAdjust="spacingAndGlyphs" style="white-space:pre" >Transitions</text>
<text x="598.6" y="83.7" font-size="20.06" font-weight="400" fill="#424242" textLength="100.3" lengthAdjust="spacingAndGlyphs" style="white-space:pre" >Animations</text>
<text x="737.2" y="83.7" font-size="20.06" font-weight="400" fill="#424242" textLength="98.0" lengthAdjust="spacingAndGlyphs" style="white-space:pre" >Slide Show</text>
<text x="870.8" y="83.7" font-size="20.06" font-weight="400" fill="#424242" textLength="62.2" lengthAdjust="spacingAndGlyphs" style="white-space:pre" >Record</text>
<text x="970.5" y="83.7" font-size="20.06" font-weight="400" fill="#424242" textLength="61.7" lengthAdjust="spacingAndGlyphs" style="white-space:pre" >Review</text>
<text x="1068.4" y="83.7" font-size="20.06" font-weight="400" fill="#424242" textLength="42.8" lengthAdjust="spacingAndGlyphs" style="white-space:pre" >View</text>
<text x="1146.8" y="83.7" font-size="20.06" font-weight="400" fill="#424242" textLength="42.4" lengthAdjust="spacingAndGlyphs" style="white-space:pre" >Help</text>
<text x="1228.2" y="83.7" font-size="20.06" font-weight="400" fill="#B7472A" textLength="123.0" lengthAdjust="spacingAndGlyphs" style="white-space:pre" >Shape Format</text>
<text x="1427.7" y="83.1" font-size="21.95" font-weight="400" fill="#B7472A" textLength="51.6" lengthAdjust="spacingAndGlyphs" style="white-space:pre" stroke="#B7472A" stroke-width="0.7">Share</text>
<text x="24.0" y="176.7" font-size="17.44" font-weight="400" fill="#444444" textLength="41.8" lengthAdjust="spacingAndGlyphs" style="white-space:pre" >Paste</text>
<text x="25.4" y="234.3" font-size="15.55" font-weight="400" fill="#444444" textLength="69.5" lengthAdjust="spacingAndGlyphs" style="white-space:pre" >Clipboard</text>
<text x="168.9" y="175.3" font-size="17.44" font-weight="400" fill="#444444" textLength="35.8" lengthAdjust="spacingAndGlyphs" style="white-space:pre" >New</text>
<text x="158.9" y="199.5" font-size="17.88" font-weight="400" fill="#444444" textLength="39.1" lengthAdjust="spacingAndGlyphs" style="white-space:pre" >Slide</text>
<text x="191.7" y="234.3" font-size="15.41" font-weight="400" fill="#444444" textLength="41.2" lengthAdjust="spacingAndGlyphs" style="white-space:pre" >Slides</text>
<text x="296.7" y="141.2" font-size="20.35" font-weight="400" fill="#B5ADA6" textLength="167.5" lengthAdjust="spacingAndGlyphs" style="white-space:pre" >Bahnschrift SemiBold</text>
<text x="513.6" y="141.2" font-size="20.35" font-weight="400" fill="#B5ADA6" textLength="33.2" lengthAdjust="spacingAndGlyphs" style="white-space:pre" >47+</text>
<text x="462.8" y="235.0" font-size="15.12" font-weight="400" fill="#444444" textLength="32.1" lengthAdjust="spacingAndGlyphs" style="white-space:pre" >Font</text>
<text x="807.5" y="235.2" font-size="15.84" font-weight="400" fill="#444444" textLength="71.7" lengthAdjust="spacingAndGlyphs" style="white-space:pre" >Paragraph</text>
<text x="1025.6" y="175.7" font-size="17.30" font-weight="400" fill="#A8A6A4" textLength="57.4" lengthAdjust="spacingAndGlyphs" style="white-space:pre" >Shapes</text>
<text x="1089.4" y="175.7" font-size="17.30" font-weight="400" fill="#333333" textLength="64.9" lengthAdjust="spacingAndGlyphs" style="white-space:pre" >Arrange</text>
<text x="1168.5" y="175.7" font-size="17.30" font-weight="400" fill="#A8A6A4" textLength="46.0" lengthAdjust="spacingAndGlyphs" style="white-space:pre" >Quick</text>
<text x="1159.3" y="199.3" font-size="18.46" font-weight="400" fill="#A8A6A4" textLength="45.7" lengthAdjust="spacingAndGlyphs" style="white-space:pre" >Styles</text>
<text x="1109.7" y="234.7" font-size="15.70" font-weight="400" fill="#444444" textLength="60.3" lengthAdjust="spacingAndGlyphs" style="white-space:pre" >Drawing</text>
<text x="1337.7" y="125.7" font-size="18.46" font-weight="400" fill="#333333" textLength="34.2" lengthAdjust="spacingAndGlyphs" style="white-space:pre" >Find</text>
<text x="1337.7" y="160.2" font-size="18.90" font-weight="400" fill="#333333" textLength="61.5" lengthAdjust="spacingAndGlyphs" style="white-space:pre" >Replace</text>
<text x="1337.7" y="193.8" font-size="18.31" font-weight="400" fill="#333333" textLength="47.7" lengthAdjust="spacingAndGlyphs" style="white-space:pre" >Select</text>
<text x="1343.8" y="234.7" font-size="14.97" font-weight="400" fill="#444444" textLength="48.9" lengthAdjust="spacingAndGlyphs" style="white-space:pre" >Editing</text>
<text x="20.4" y="284.8" font-size="22.53" font-weight="400" fill="#B7472A" textLength="9.6" lengthAdjust="spacingAndGlyphs" style="white-space:pre" >1</text>
<text x="76.6" y="309.1" font-size="8.87" font-weight="700" fill="#3A7CC4" textLength="19.7" lengthAdjust="spacingAndGlyphs" style="white-space:pre" >Word</text>
<text x="76.6" y="320.3" font-size="9.16" font-weight="700" fill="#3A7CC4" textLength="19.8" lengthAdjust="spacingAndGlyphs" style="white-space:pre" >Excel</text>
<text x="76.6" y="332.2" font-size="9.01" font-weight="700" fill="#3A7CC4" textLength="41.2" lengthAdjust="spacingAndGlyphs" style="white-space:pre" >PowerPoint</text>
<text x="384.7" y="358.1" font-size="19.33" font-weight="400" fill="#111111" textLength="181.9" lengthAdjust="spacingAndGlyphs" style="white-space:pre" >Bullets and Numbering</text>
<text x="389.5" y="401.9" font-size="15.70" font-weight="400" fill="#111111" textLength="56.7" lengthAdjust="spacingAndGlyphs" style="white-space:pre" ><tspan text-decoration="underline">B</tspan>ulleted</text>
<text x="459.7" y="403.8" font-size="15.70" font-weight="400" fill="#111111" textLength="75.9" lengthAdjust="spacingAndGlyphs" style="white-space:pre" ><tspan text-decoration="underline">N</tspan>umbered</text>
<text x="440.5" y="503.0" font-size="24.71" font-weight="400" fill="#000000" textLength="58.6" lengthAdjust="spacingAndGlyphs" style="white-space:pre" >None</text>
<text x="401.1" y="721.1" font-size="16.28" font-weight="400" fill="#111111" textLength="33.3" lengthAdjust="spacingAndGlyphs" style="white-space:pre" ><tspan text-decoration="underline">S</tspan>ize:</text>
<text x="451.3" y="721.1" font-size="16.28" font-weight="400" fill="#111111" textLength="22.4" lengthAdjust="spacingAndGlyphs" style="white-space:pre" >100</text>
<text x="548.2" y="716.8" font-size="16.28" font-weight="400" fill="#111111" textLength="61.5" lengthAdjust="spacingAndGlyphs" style="white-space:pre" >% of text</text>
<text x="401.0" y="760.0" font-size="16.28" font-weight="400" fill="#111111" textLength="39.8" lengthAdjust="spacingAndGlyphs" style="white-space:pre" ><tspan text-decoration="underline">C</tspan>olor</text>
<text x="849.4" y="724.2" font-size="15.99" font-weight="400" fill="#111111" textLength="58.5" lengthAdjust="spacingAndGlyphs" style="white-space:pre" ><tspan text-decoration="underline">P</tspan>icture...</text>
<text x="836.6" y="765.5" font-size="15.99" font-weight="400" fill="#111111" textLength="83.0" lengthAdjust="spacingAndGlyphs" style="white-space:pre" >C<tspan text-decoration="underline">u</tspan>stomize...</text>
<text x="419.8" y="824.0" font-size="15.99" font-weight="400" fill="#111111" textLength="39.1" lengthAdjust="spacingAndGlyphs" style="white-space:pre" >R<tspan text-decoration="underline">e</tspan>set</text>
<text x="758.4" y="824.2" font-size="15.84" font-weight="400" fill="#111111" textLength="22.4" lengthAdjust="spacingAndGlyphs" style="white-space:pre" >OK</text>
<text x="872.6" y="824.2" font-size="15.84" font-weight="400" fill="#111111" textLength="46.6" lengthAdjust="spacingAndGlyphs" style="white-space:pre" >Cancel</text>
<text x="1100.6" y="417.6" font-size="25.44" font-weight="700" fill="#000000" textLength="209.8" lengthAdjust="spacingAndGlyphs" style="white-space:pre" >Symbol inserted</text>
<text x="702.6" y="919.0" font-size="27.04" font-weight="700" fill="#000000" textLength="136.5" lengthAdjust="spacingAndGlyphs" style="white-space:pre" >OK Button</text>
<text x="11.3" y="1007.9" font-size="16.13" font-weight="400" fill="#444444" textLength="77.6" lengthAdjust="spacingAndGlyphs" style="white-space:pre" >Slide 1 of 1</text>
<text x="165.0" y="1007.9" font-size="16.13" font-weight="400" fill="#444444" textLength="156.4" lengthAdjust="spacingAndGlyphs" style="white-space:pre" >English (United States)</text>
<text x="369.0" y="1007.9" font-size="16.13" font-weight="400" fill="#444444" textLength="169.4" lengthAdjust="spacingAndGlyphs" style="white-space:pre" >Accessibility: Good to go</text>
<text x="783.4" y="1007.9" font-size="16.13" font-weight="400" fill="#444444" textLength="41.4" lengthAdjust="spacingAndGlyphs" style="white-space:pre" >Notes</text>
<text x="878.1" y="1007.9" font-size="16.13" font-weight="400" fill="#444444" textLength="76.8" lengthAdjust="spacingAndGlyphs" style="white-space:pre" >Comments</text>
<text x="1435.4" y="1008.0" font-size="15.99" font-weight="400" fill="#444444" textLength="32.5" lengthAdjust="spacingAndGlyphs" style="white-space:pre" >64%</text>
</g>
</svg></body></html>
